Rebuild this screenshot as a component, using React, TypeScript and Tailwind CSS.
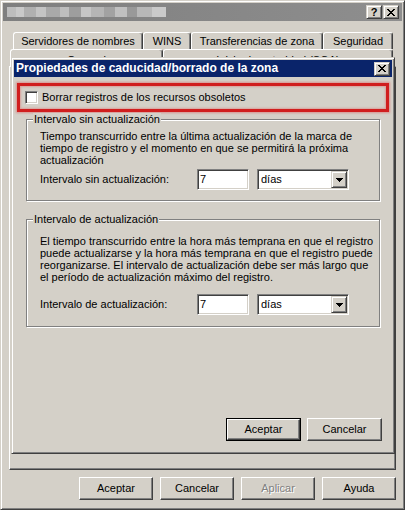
import type { ReactNode } from 'react';

const raised =
  'border border-t-white border-l-white border-r-[#404040] border-b-[#404040] shadow-[inset_-1px_-1px_0_#808080]';
const raisedSmall =
  'border border-t-[#d4d0c8] border-l-[#d4d0c8] border-r-[#404040] border-b-[#404040] shadow-[inset_1px_1px_0_#fff,inset_-1px_-1px_0_#808080]';
const sunken =
  'border border-t-[#808080] border-l-[#808080] border-r-white border-b-white shadow-[inset_1px_1px_0_#404040,inset_-1px_-1px_0_#d4d0c8] bg-white';

// pixelated (censored) title of the outer window
const titleBlocks = [
  'w-[9px] bg-[#bdbdbd]',
  'w-[8px] bg-[#c9c9c9]',
  'w-[12px] bg-[#b0b0b0]',
  'w-[10px] bg-[#c4c4c4]',
  'w-[14px] bg-[#a9a9a9]',
  'w-[9px] bg-[#bebebe]',
  'w-[12px] bg-[#9e9e9e]',
  'w-[10px] bg-[#c6c6c6]',
  'w-[13px] bg-[#b5b5b5]',
  'w-[11px] bg-[#a2a2a2]',
  'w-[12px] bg-[#c0c0c0]',
  'w-[10px] bg-[#999999]',
  'w-[15px] bg-[#b8b8b8]',
  'w-[14px] bg-[#cacaca]',
];

const CloseGlyph = () => {
  const rows = ['11000011', '01100110', '00111100', '00011000', '00111100', '01100110', '11000011'];
  return (
    <svg width="8" height="7" shapeRendering="crispEdges">
      {rows.map((r, y) =>
        r.split('').map((c, x) => (c === '1' ? <rect key={`${x}-${y}`} x={x} y={y} width="1" height="1" fill="#000" /> : null)),
      )}
    </svg>
  );
};

const CaptionButton = ({ children }: { children: ReactNode }) => (
  <div className={`w-[16px] h-[14px] bg-[#d4d0c8] flex items-center justify-center ${raisedSmall}`}>{children}</div>
);

const Button = ({ label, className = '', disabled = false }: { label: string; className?: string; disabled?: boolean }) => (
  <div className={`h-[23px] bg-[#d4d0c8] flex items-center justify-center ${raised} ${className}`}>
    <span className={disabled ? 'text-[#808080] [text-shadow:1px_1px_0_#fff]' : ''}>{label}</span>
  </div>
);

const Combo = ({ value }: { value: string }) => (
  <div className={`ml-[8px] w-[92px] h-[21px] flex p-[1px] ${sunken}`}>
    <span className="flex-1 pl-[2px] flex items-center">{value}</span>
    <div className={`w-[16px] h-full bg-[#d4d0c8] flex items-center justify-center ${raisedSmall}`}>
      <svg width="7" height="4" shapeRendering="crispEdges">
        <rect x="0" y="0" width="7" height="1" fill="#000" />
        <rect x="1" y="1" width="5" height="1" fill="#000" />
        <rect x="2" y="2" width="3" height="1" fill="#000" />
        <rect x="3" y="3" width="1" height="1" fill="#000" />
      </svg>
    </div>
  </div>
);

const Group = ({
  title,
  lines,
  label,
  className,
  padTop,
  rowTop,
  padBottom,
}: {
  title: string;
  lines: string[];
  label: string;
  className: string;
  padTop: string;
  rowTop: string;
  padBottom: string;
}) => (
  <fieldset className={`mx-[12px] border border-[#808080] shadow-[1px_1px_0_#fff,inset_1px_1px_0_#fff] ${className}`}>
    <legend className="ml-[6px] px-[1px] bg-[#d4d0c8] leading-[13px]">{title}</legend>
    <div className={`pl-[13px] ${padTop} ${padBottom}`}>
      <p className="leading-[12px] whitespace-nowrap">
        {lines.map((l, i) => (
          <span key={i} className="block">
            {l}
          </span>
        ))}
      </p>
      <div className={`flex items-center ${rowTop}`}>
        <span className="w-[157px]">{label}</span>
        <div className={`w-[52px] h-[21px] flex items-center pl-[2px] ${sunken}`}>7</div>
        <Combo value="días" />
      </div>
    </div>
  </fieldset>
);

export default function App() {
  return (
    <div className="relative w-[405px] h-[510px] flex flex-col bg-[#d4d0c8] p-[2px] border border-t-[#d4d0c8] border-l-[#d4d0c8] border-r-[#404040] border-b-[#404040] shadow-[inset_1px_1px_0_#fff,inset_-1px_-1px_0_#808080] font-['Liberation_Sans',Arial,sans-serif] text-[11px] leading-[13px] text-black">
      {/* outer window title bar (inactive) */}
      <div className="h-[18px] flex items-center bg-linear-to-r from-[#7f7f7f] to-[#8e8e8e] pl-[4px] pr-[3px]">
        <div className="flex h-[10px]">
          {titleBlocks.map((c, i) => (
            <div key={i} className={`h-full ${c}`} />
          ))}
        </div>
        <div className="ml-auto flex gap-[1px]">
          <CaptionButton>
            <span className="font-bold text-[11px] leading-none">?</span>
          </CaptionButton>
          <CaptionButton>
            <CloseGlyph />
          </CaptionButton>
        </div>
      </div>

      {/* tab rows */}
      <div className="mt-[11px] ml-[10px] flex h-[17px]">
        {[
          ['Servidores de nombres', 'w-[130px]'],
          ['WINS', 'w-[48px]'],
          ['Transferencias de zona', 'w-[132px]'],
          ['Seguridad', 'w-[70px]'],
        ].map(([t, w]) => (
          <div
            key={t}
            className={`${w} h-full flex items-center justify-center rounded-t-[3px] border-t border-l border-r border-t-white border-l-white border-r-[#404040] shadow-[inset_-1px_0_0_#808080]`}
          >
            {t}
          </div>
        ))}
      </div>
      <div className="ml-[7px] flex h-[17px]">
        {[
          ['General', 'w-[153px]'],
          ['Inicio de autoridad (SOA)', 'w-[230px]'],
        ].map(([t, w]) => (
          <div
            key={t}
            className={`${w} h-full flex items-start pt-[4px] justify-center rounded-t-[3px] border-t border-l border-r border-t-white border-l-white border-r-[#404040] shadow-[inset_-1px_0_0_#808080]`}
          >
            {t}
          </div>
        ))}
      </div>

      {/* tab panel */}
      <div className={`flex-1 mx-[6px] ${raised}`} />

      {/* outer buttons */}
      <div className="mt-[7px] mb-[7px] pr-[6px] flex justify-end gap-[7px]">
        <Button label="Aceptar" className="w-[74px]" />
        <Button label="Cancelar" className="w-[74px]" />
        <Button label="Aplicar" className="w-[74px]" disabled />
        <Button label="Ayuda" className="w-[74px]" />
      </div>

      {/* dialog window on top */}
      <div className="absolute left-[10px] top-[56px] w-[384px] h-[397px] flex flex-col bg-[#d4d0c8] p-[2px] border border-t-[#d4d0c8] border-l-[#d4d0c8] border-r-[#404040] border-b-[#404040] shadow-[inset_1px_1px_0_#fff,inset_-1px_-1px_0_#808080]">
        <div className="h-[17px] flex items-center bg-[#0a246a] pl-[2px] pr-[2px]">
          <span className="font-bold text-white text-[12px]">Propiedades de caducidad/borrado de la zona</span>
          <div className="ml-auto">
            <CaptionButton>
              <CloseGlyph />
            </CaptionButton>
          </div>
        </div>

        <div className="mx-[3px] mt-[6px] h-[29px] flex items-center gap-[4px] pl-[5px] border-[3px] border-[#d01e1e] shadow-[0_0_2px_1px_rgba(225,70,70,0.45),inset_0_0_2px_1px_rgba(225,70,70,0.35)]">
          <div className={`w-[13px] h-[13px] ${sunken}`} />
          <span>Borrar registros de los recursos obsoletos</span>
        </div>

        <Group
          title="Intervalo sin actualización"
          className="mt-[1px]"
          padTop="pt-[4px]"
          rowTop="mt-[3px]"
          padBottom="pb-[10px]"
          label="Intervalo sin actualización:"
          lines={[
            'Tiempo transcurrido entre la última actualización de la marca de',
            'tiempo de registro y el momento en que se permitirá la próxima',
            'actualización',
          ]}
        />

        <Group
          title="Intervalo de actualización"
          className="mt-[12px]"
          padTop="pt-[9px]"
          rowTop="mt-[11px]"
          padBottom="pb-[11px]"
          label="Intervalo de actualización:"
          lines={[
            'El tiempo transcurrido entre la hora más temprana en que el registro',
            'puede actualizarse y la hora más temprana en que el registro puede',
            'reorganizarse. El intervalo de actualización debe ser más largo que',
            'el período de actualización máximo del registro.',
          ]}
        />

        <div className="mt-auto pr-[10px] pb-[10px] flex justify-end gap-[6px]">
          <div className="w-[75px] h-[23px] border border-black">
            <Button label="Aceptar" className="w-full h-full" />
          </div>
          <Button label="Cancelar" className="w-[75px]" />
        </div>
      </div>
    </div>
  );
}
